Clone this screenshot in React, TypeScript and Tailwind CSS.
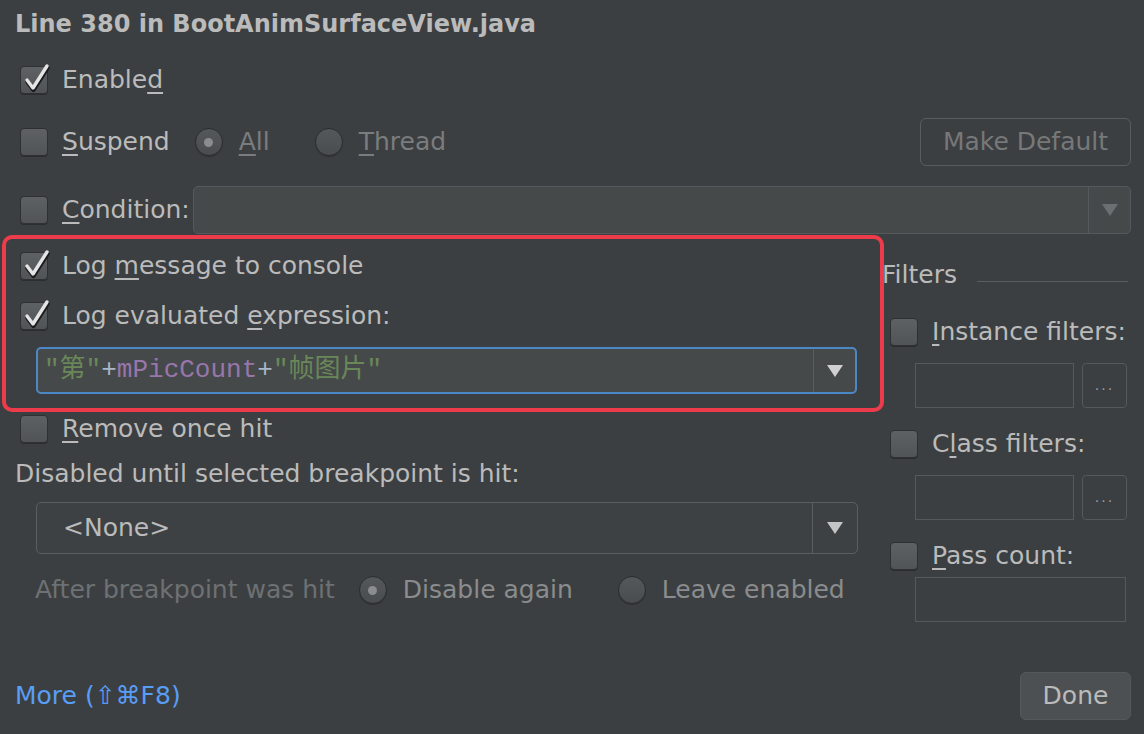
import React from "react";

const font = "font-['DejaVu_Sans',sans-serif]";

function Check({ checked }: { checked?: boolean }) {
    return (
        <span className="relative inline-block w-[28px] h-[28px] shrink-0 rounded-[4px] bg-linear-to-b from-[#5e6163] to-[#515456] border border-[#2e3032] shadow-[0_1px_0_#2b2d2e]">
            {checked &&
                <svg className="absolute left-[2px] top-[-4px] overflow-visible" width="28" height="30" viewBox="0 0 28 30">
                    <path d="M4 17 L10 25 L24 3" fill="none" stroke="#1a1b1c" strokeWidth="4.5" strokeLinecap="round" strokeLinejoin="round" transform="translate(0.5 1.8)" />
                    <path d="M4 17 L10 25 L24 3" fill="none" stroke="#e4e4e4" strokeWidth="3.4" strokeLinecap="round" strokeLinejoin="round" />
                </svg>}
        </span>
    )
}

function Radio({ selected }: { selected?: boolean }) {
    return (
        <span className="flex items-center justify-center w-[28px] h-[28px] shrink-0 rounded-full bg-linear-to-b from-[#54585a] to-[#4a4d4f] border border-[#2b2d2e] shadow-[0_1px_0_#2f3132]">
            {selected && <span className="w-[9px] h-[9px] rounded-full bg-[#8a8c8e]" />}
        </span>
    )
}

function Arrow({ color }: { color: string }) {
    return (
        <svg width="16" height="12" viewBox="0 0 16 12">
            <path d="M0 0 H16 L8 12 Z" fill={color} />
        </svg>
    )
}

function U({ children }: { children: React.ReactNode }) {
    return <span className="underline underline-offset-[4px] decoration-[2px]">{children}</span>
}

export default function App() {
    return (
        <div className={`w-[1144px] h-[734px] bg-[#3c3f41] overflow-hidden flex flex-col text-[#bbbbbb] text-[25px] ${font}`}>
            {/* header rows */}
            <div className="h-[48px] flex items-center pl-[15px] font-bold text-[24px]">Line 380 in BootAnimSurfaceView.java</div>

            <div className="h-[48px] mt-[8px] flex items-center pl-[20px] gap-[14px]">
                <Check checked />
                <span>Enable<U>d</U></span>
            </div>

            <div className="h-[48px] mt-[14px] flex items-center pl-[20px] pr-[13px]">
                <Check />
                <span className="ml-[14px]"><U>S</U>uspend</span>
                <span className="ml-[25px]"><Radio selected /></span>
                <span className="ml-[16px] text-[#7a7c7e]"><U>A</U>ll</span>
                <span className="ml-[45px]"><Radio /></span>
                <span className="ml-[16px] text-[#7a7c7e]"><U>T</U>hread</span>
                <button className="ml-auto w-[211px] h-[48px] rounded-[6px] border border-[#5a5d5f] text-[#767879]">Make Default</button>
            </div>

            <div className="h-[48px] mt-[20px] flex items-center pl-[20px] pr-[13px]">
                <Check />
                <span className="ml-[14px]"><U>C</U>ondition:</span>
                <div className="ml-[3px] flex-1 h-[48px] flex rounded-[5px] border border-[#56595b] bg-[#45494a]">
                    <div className="flex-1" />
                    <div className="w-[42px] border-l border-[#56595b] flex items-center justify-center"><Arrow color="#6c6f71" /></div>
                </div>
            </div>

            {/* main two column section */}
            <div className="mt-[1px] flex">
                <div className="ml-[2px] w-[882px] flex flex-col">
                    <div className="h-[177px] rounded-[10px] border-[4px] border-[#ec3b4a] pt-[7px] pl-[14px] pr-[23px] flex flex-col">
                        <div className="h-[40px] flex items-center gap-[14px]">
                            <Check checked />
                            <span>Log <U>m</U>essage to console</span>
                        </div>
                        <div className="h-[40px] mt-[10px] flex items-center gap-[14px]">
                            <Check checked />
                            <span>Log evaluated <U>e</U>xpression:</span>
                        </div>
                        <div className="ml-[16px] mt-[11px] h-[47px] flex rounded-[5px] border-[2px] border-[#4c88c6] bg-[#45494a]">
                            <div className="flex-1 flex items-center pl-[6px] text-[26px] font-['Liberation_Mono','Noto_Sans_CJK_SC',monospace]">
                                <span className="text-[#6a8759]">"第"</span>
                                <span className="text-[#a9b7c6]">+</span>
                                <span className="text-[#9876aa]">mPicCount</span>
                                <span className="text-[#a9b7c6]">+</span>
                                <span className="text-[#6a8759]">"帧图片"</span>
                            </div>
                            <div className="w-[42px] border-l border-[#5a5d5f] flex items-center justify-center"><Arrow color="#d0d0d0" /></div>
                        </div>
                    </div>

                    <div className="h-[34px] flex items-center gap-[14px] pl-[18px]">
                        <Check />
                        <span><U>R</U>emove once hit</span>
                    </div>

                    <div className="h-[36px] mt-[10px] flex items-center pl-[13px]">Disabled until selected breakpoint is hit:</div>

                    <div className="ml-[34px] w-[822px] mt-[10px] h-[52px] flex rounded-[5px] border border-[#5b5e60] bg-[#3e4143]">
                        <div className="flex-1 flex items-center pl-[26px]">&lt;None&gt;</div>
                        <div className="w-[45px] border-l border-[#5b5e60] flex items-center justify-center"><Arrow color="#c4c4c4" /></div>
                    </div>

                    <div className="h-[40px] mt-[16px] flex items-center pl-[33px]">
                        <span className="text-[#6e7173]">After breakpoint was hit</span>
                        <span className="ml-[24px]"><Radio selected /></span>
                        <span className="ml-[16px] text-[#8a8c8e]">Disable again</span>
                        <span className="ml-[45px]"><Radio /></span>
                        <span className="ml-[16px] text-[#8a8c8e]">Leave enabled</span>
                    </div>
                </div>

                {/* filters */}
                <div className="flex-1 flex flex-col pr-[16px]">
                    <div className="h-[40px] mt-[20px] flex items-center">
                        <span className="-ml-[2px]">Filters</span>
                        <span className="ml-[20px] flex-1 h-px bg-[#5a5d5f] mt-[12px]" />
                    </div>
                    <div className="h-[34px] mt-[20px] flex items-center gap-[14px] pl-[6px]">
                        <Check />
                        <span><U>I</U>nstance filters:</span>
                    </div>
                    <div className="mt-[14px] h-[45px] flex pl-[31px] gap-[8px]">
                        <div className="w-[159px] border border-[#56595b]" />
                        <div className="w-[45px] rounded-[4px] border border-[#56595b] flex items-center justify-center text-[14px] text-[#9a9a9a] tracking-[2px]">...</div>
                    </div>
                    <div className="h-[34px] mt-[19px] flex items-center gap-[14px] pl-[6px]">
                        <Check />
                        <span>C<U>l</U>ass filters:</span>
                    </div>
                    <div className="mt-[14px] h-[45px] flex pl-[31px] gap-[8px]">
                        <div className="w-[159px] border border-[#56595b]" />
                        <div className="w-[45px] rounded-[4px] border border-[#56595b] flex items-center justify-center text-[14px] text-[#9a9a9a] tracking-[2px]">...</div>
                    </div>
                    <div className="h-[34px] mt-[19px] flex items-center gap-[14px] pl-[6px]">
                        <Check />
                        <span><U>P</U>ass count:</span>
                    </div>
                    <div className="mt-[4px] h-[45px] ml-[31px] w-[211px] border border-[#56595b]" />
                </div>
            </div>

            {/* footer */}
            <div className="mt-auto mb-[14px] h-[48px] flex items-center pl-[15px] pr-[13px]">
                <span className="text-[#589df6]">More (⇧⌘F8)</span>
                <button className="ml-auto w-[111px] h-[48px] rounded-[6px] border border-[#55585a] bg-[#4c5052] text-[#bbbbbb]">Done</button>
            </div>
        </div>
    )
}
